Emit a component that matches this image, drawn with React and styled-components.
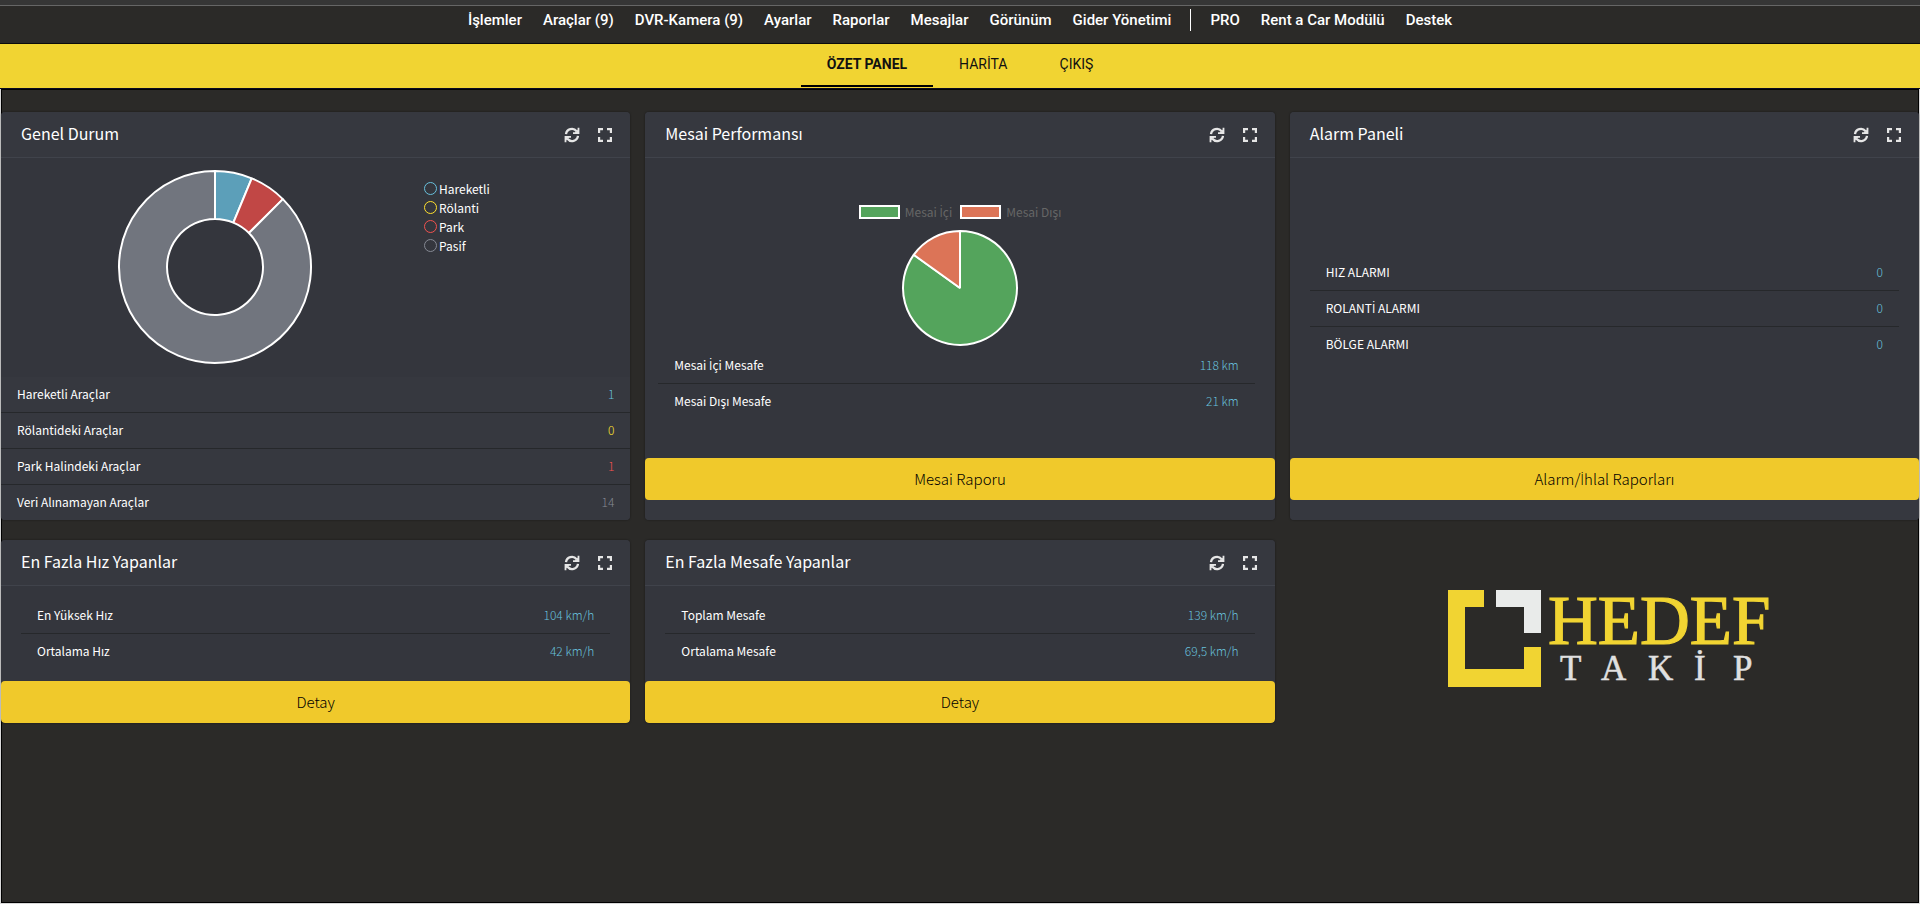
import React from 'react';
import styled, { createGlobalStyle } from 'styled-components';

const GlobalStyle = createGlobalStyle`
  * {
    box-sizing: border-box;
  }

  body {
    margin: 0;
    background: #2b2a28;
    color: #fff;
    font-family: 'Noto Sans CJK JP', 'Noto Sans', sans-serif;
  }
`;

const Page = styled.div`
  display: flex;
  flex-direction: column;
  min-height: 100vh;
`;

const Nav = styled.nav`
  display: flex;
  justify-content: center;
  align-items: flex-start;
  gap: 21px;
  height: 44px;
  padding-top: 4px;
  border-top: 5px solid #363636;
  border-bottom: 1px solid #0b0b0b;
  box-shadow: inset 0 1px 0 #666;
`;

const NavLink = styled.a`
  color: #fff;
  font: 500 15px/22px Roboto, sans-serif;
  text-decoration: none;
`;

const NavDivider = styled.span`
  width: 1px;
  height: 22px;
  margin-right: -2px;
  margin-left: -2px;
  background: #fff;
`;

const Tabs = styled.nav`
  display: flex;
  justify-content: center;
  height: 45px;
  padding-bottom: 1px;
  background: #f1d432;
  border-bottom: 1px solid #0b0b20;
`;

const Tab = styled.a`
  padding: 0 26px;
  border-bottom: 2px solid ${(props) => (props.$active ? '#000' : 'transparent')};
  color: #111;
  font: ${(props) => (props.$active ? 700 : 400)} 14px/41px Roboto, sans-serif;
  text-decoration: none;
`;

const Board = styled.main`
  display: grid;
  flex: 1;
  grid-template-columns: repeat(3, 1fr);
  grid-template-rows: 408px auto;
  align-items: start;
  align-content: start;
  gap: 20px 15px;
  padding: 23px 0 0;
  border: 1px solid #d8d8d8;
  border-top: 0;
  box-shadow: inset 0 0 0 1px #000;
`;

const Panel = styled.section`
  display: flex;
  flex-direction: column;
  height: ${(props) => (props.$tall ? '100%' : 'auto')};
  background: #34363d;
  border-radius: 4px;
  box-shadow: 0 0 2px rgba(0, 0, 0, 0.5);
  overflow: hidden;
`;

const PanelHeader = styled.header`
  display: flex;
  align-items: center;
  gap: 18px;
  height: 46px;
  padding: 0 18px 0 20px;
  background: #36383f;
  border-bottom: 1px solid #40434b;
`;

const PanelTitle = styled.h2`
  flex: 1;
  margin: 0;
  padding-bottom: 3px;
  font-size: 16px;
  font-weight: 400;
  line-height: 24px;
`;

const IconButton = styled.button`
  display: flex;
  padding: 0;
  border: 0;
  background: none;
  color: #e6e6e6;
  cursor: pointer;
`;

const List = styled.ul`
  margin: 0;
  padding: ${(props) => props.$padding || '0'};
  background: ${(props) => (props.$light ? '#36383f' : 'transparent')};
  list-style: none;
`;

const Row = styled.li`
  display: flex;
  justify-content: space-between;
  padding: 7px 16px 8px;
  font-size: 12px;
  line-height: 20px;

  & + & {
    border-top: 1px solid #26282b;
  }
`;

const Value = styled.span`
  color: ${(props) => props.$color};
  font-weight: 300;
`;

// The CJK face has no dotted capital I of its own
const DottedI = styled.span`
  font-family: 'Open Sans', 'Noto Sans', sans-serif;
  line-height: 1;
`;

const Status = styled.div`
  display: flex;
  flex: 1;
  padding: 9px 0 0 114px;
`;

const StatusLegend = styled.ul`
  margin: 12px 0 0 109px;
  padding: 0;
  font-size: 12px;
  line-height: 19px;
  list-style: none;
`;

const StatusItem = styled.li`
  display: flex;
  align-items: center;
  gap: 2px;
`;

const Ring = styled.span`
  width: 13px;
  height: 13px;
  border: 1px solid ${(props) => props.$color};
  border-radius: 50%;
`;

const ChartArea = styled.div`
  display: flex;
  flex-direction: column;
  align-items: center;
  padding-top: 45px;
`;

const PieLegend = styled.div`
  display: flex;
  gap: 8px;
  margin-bottom: 7px;
  color: #666;
  font-size: 12px;
  line-height: 18px;
`;

const PieLegendItem = styled.span`
  display: flex;
  align-items: center;
  gap: 5px;
`;

const Swatch = styled.span`
  width: 41px;
  height: 14px;
  border: 2px solid #fff;
  background: ${(props) => props.$color};
`;

const WideButton = styled.button`
  width: 100%;
  height: 42px;
  padding: 0 0 2px;
  border: 0;
  border-radius: 4px;
  background: #f0c92b;
  color: #000;
  font-family: inherit;
  font-size: 15px;
  font-weight: 300;
  cursor: pointer;
`;

const Footer = styled.div`
  margin-top: auto;
  padding-bottom: 20px;
  background: #36383f;
`;

const LogoBox = styled.div`
  display: flex;
  justify-content: center;
  padding: 50px 0 0 10px;
`;

const LogoSvg = styled.svg`
  overflow: visible;
`;

const menu = [
  'İşlemler',
  'Araçlar (9)',
  'DVR-Kamera (9)',
  'Ayarlar',
  'Raporlar',
  'Mesajlar',
  'Görünüm',
  'Gider Yönetimi',
];

const extraMenu = ['PRO', 'Rent a Car Modülü', 'Destek'];

const BLUE = '#68c0dc';
const YELLOW = '#f1d432';

const statuses = [
  { name: 'Hareketli', label: 'Hareketli Araçlar', count: 1, color: BLUE, fill: '#5c9fb9' },
  { name: 'Rölanti', label: 'Rölantideki Araçlar', count: 0, color: '#ffe02e' },
  { name: 'Park', label: 'Park Halindeki Araçlar', count: 1, color: '#f2524f', fill: '#c14745' },
  { name: 'Pasif', label: 'Veri Alınamayan Araçlar', count: 14, color: '#858993', fill: '#71757e' },
];

const shifts = [
  { name: 'Mesai İçi', label: 'Mesai İçi Mesafe', distance: 118, color: '#54a45c' },
  { name: 'Mesai Dışı', label: 'Mesai Dışı Mesafe', distance: 21, color: '#dc7457' },
];

function Label({ text }) {
  return (
    <span>
      {text.split(/(İ)/).map((part, i) => (part === 'İ' ? <DottedI key={i}>{part}</DottedI> : part))}
    </span>
  );
}

function slicePath(c, outer, inner, from, to) {
  const point = (r, t) => {
    const a = t * 2 * Math.PI;
    return `${c + r * Math.sin(a)} ${c - r * Math.cos(a)}`;
  };
  const large = to - from > 0.5 ? 1 : 0;
  return [
    `M${point(outer, from)}`,
    `A${outer} ${outer} 0 ${large} 1 ${point(outer, to)}`,
    `L${point(inner, to)}`,
    inner ? `A${inner} ${inner} 0 ${large} 0 ${point(inner, from)}` : '',
    'Z',
  ].join(' ');
}

function Pie({ size, radius, inner = 0, data, label }) {
  const total = data.reduce((sum, d) => sum + d.value, 0);
  let start = 0;
  return (
    <svg width={size} height={size} role="img" aria-label={label}>
      {data
        .filter((d) => d.value > 0)
        .map((d) => {
          const from = start;
          start += d.value / total;
          return (
            <path
              key={d.color}
              d={slicePath(size / 2, radius, inner, from, start)}
              fill={d.color}
              stroke="#fff"
              strokeWidth="2"
              strokeLinejoin="bevel"
            />
          );
        })}
    </svg>
  );
}

function RefreshIcon() {
  return (
    <svg width="16" height="16" viewBox="0 0 16 16" fill="none" stroke="currentColor" strokeWidth="2.3">
      <path d="M2 7.2A6 6 0 0 1 12.6 4.2M14 8.8A6 6 0 0 1 3.4 11.8" />
      <path d="M14.5 0.8v5.4H9M1.5 15.2V9.8H7" strokeWidth="1.8" />
      <path d="M14.5 2v4.5H10zM1.5 14V9.5H6z" fill="currentColor" stroke="none" />
    </svg>
  );
}

function ExpandIcon() {
  return (
    <svg width="14" height="14" viewBox="0 0 14 14" fill="none" stroke="currentColor" strokeWidth="2.2">
      <path d="M1.1 5V1.1H5M9 1.1h3.9V5M12.9 9v3.9H9M5 12.9H1.1V9" />
    </svg>
  );
}

function Header({ title }) {
  return (
    <PanelHeader>
      <PanelTitle>{title}</PanelTitle>
      <IconButton type="button" aria-label="Yenile">
        <RefreshIcon />
      </IconButton>
      <IconButton type="button" aria-label="Tam ekran">
        <ExpandIcon />
      </IconButton>
    </PanelHeader>
  );
}

function Rows({ items, ...rest }) {
  return (
    <List {...rest}>
      {items.map(([label, value, color = BLUE]) => (
        <Row key={label}>
          <Label text={label} />
          <Value $color={color}>{value}</Value>
        </Row>
      ))}
    </List>
  );
}

function Logo() {
  return (
    <LogoSvg width="322" height="97" viewBox="0 0 322 97" role="img" aria-label="Hedef Takip">
      <path d="M0 0H36V17H17V79H76V57H93V97H0Z" fill={YELLOW} />
      <path d="M48 0H93V43H76V17H48Z" fill="#e9ebea" />
      <g fontFamily="'Liberation Serif', serif">
        <text x="100" y="54" fontSize="69" fill={YELLOW} stroke={YELLOW} strokeWidth="1.2">
          HEDEF
        </text>
        <text x="112 153 200 246 285" y="90" fontSize="35" fill="#e0e0e0" stroke="#e0e0e0" strokeWidth="0.5">
          TAKİP
        </text>
      </g>
    </LogoSvg>
  );
}

function App() {
  return (
    <Page>
      <GlobalStyle />
      <Nav>
        {menu.map((item) => (
          <NavLink href="#" key={item}>
            {item}
          </NavLink>
        ))}
        <NavDivider />
        {extraMenu.map((item) => (
          <NavLink href="#" key={item}>
            {item}
          </NavLink>
        ))}
      </Nav>
      <Tabs>
        <Tab href="#" $active>
          ÖZET PANEL
        </Tab>
        <Tab href="#">HARİTA</Tab>
        <Tab href="#">ÇIKIŞ</Tab>
      </Tabs>

      <Board>
        <Panel $tall>
          <Header title="Genel Durum" />
          <Status>
            <Pie
              size={200}
              radius={96}
              inner={48}
              label="Genel Durum"
              data={statuses.map((s) => ({ value: s.count, color: s.fill || s.color }))}
            />
            <StatusLegend>
              {statuses.map((s) => (
                <StatusItem key={s.name}>
                  <Ring $color={s.color} />
                  {s.name}
                </StatusItem>
              ))}
            </StatusLegend>
          </Status>
          <Rows $light items={statuses.map((s) => [s.label, s.count, s.color])} />
        </Panel>

        <Panel $tall>
          <Header title="Mesai Performansı" />
          <ChartArea>
            <PieLegend>
              {shifts.map((s) => (
                <PieLegendItem key={s.name}>
                  <Swatch $color={s.color} />
                  <Label text={s.name} />
                </PieLegendItem>
              ))}
            </PieLegend>
            <Pie
              size={120}
              radius={57}
              label="Mesai Performansı"
              data={shifts.map((s) => ({ value: s.distance, color: s.color }))}
            />
          </ChartArea>
          <Rows $padding="0 20px 0 13px" items={shifts.map((s) => [s.label, `${s.distance} km`])} />
          <Footer>
            <WideButton type="button">Mesai Raporu</WideButton>
          </Footer>
        </Panel>

        <Panel $tall>
          <Header title="Alarm Paneli" />
          <Rows
            $padding="97px 20px 0"
            items={[
              ['HIZ ALARMI', 0],
              ['ROLANTİ ALARMI', 0],
              ['BÖLGE ALARMI', 0],
            ]}
          />
          <Footer>
            <WideButton type="button">
              <Label text="Alarm/İhlal Raporları" />
            </WideButton>
          </Footer>
        </Panel>

        <Panel>
          <Header title="En Fazla Hız Yapanlar" />
          <Rows
            $padding="12px 20px"
            items={[
              ['En Yüksek Hız', '104 km/h'],
              ['Ortalama Hız', '42 km/h'],
            ]}
          />
          <WideButton type="button">Detay</WideButton>
        </Panel>

        <Panel>
          <Header title="En Fazla Mesafe Yapanlar" />
          <Rows
            $padding="12px 20px"
            items={[
              ['Toplam Mesafe', '139 km/h'],
              ['Ortalama Mesafe', '69,5 km/h'],
            ]}
          />
          <WideButton type="button">Detay</WideButton>
        </Panel>

        <LogoBox>
          <Logo />
        </LogoBox>
      </Board>
    </Page>
  );
}

export default App;
